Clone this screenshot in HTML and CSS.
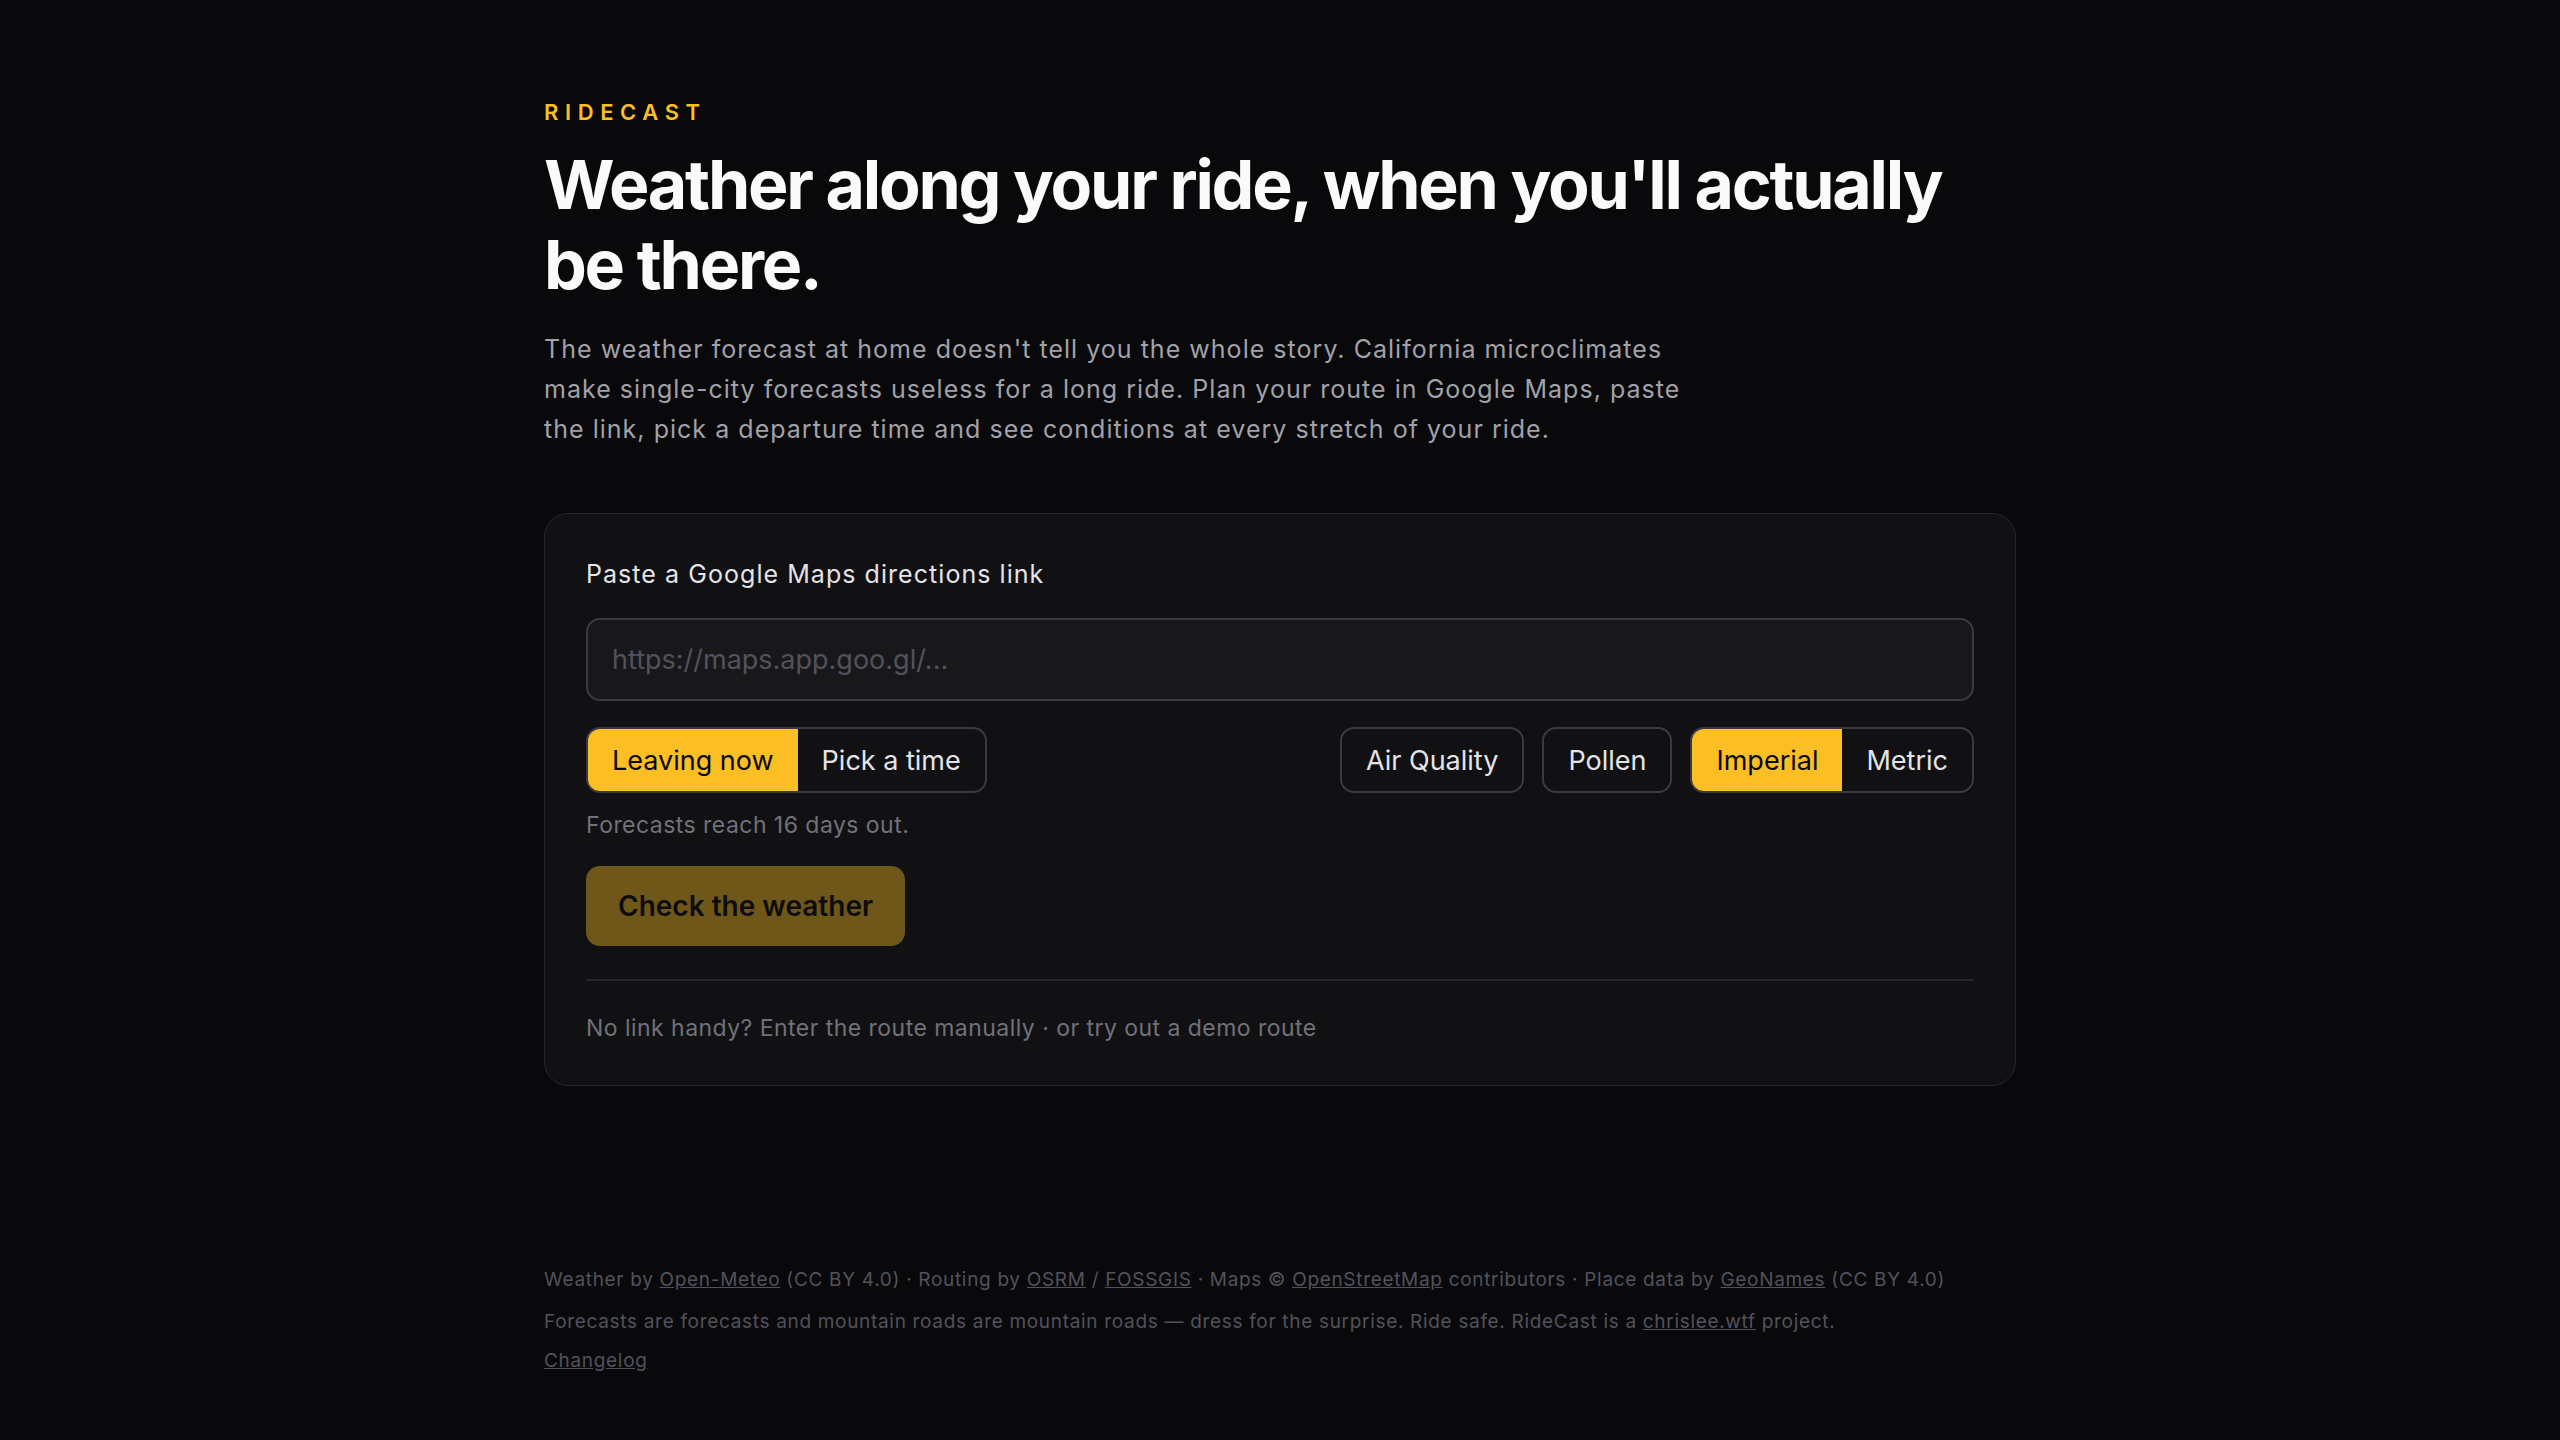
FILE: index.html
```html
<!DOCTYPE html>
<html lang="en">
<head>
    <meta charset="UTF-8">
    <meta name="viewport" content="width=device-width, initial-scale=1.0">
    <title>RideCast</title>
    <link rel="stylesheet" href="styles.css">
</head>
<body>
    <main class="page">
        <header class="intro">
            <div class="brand">RIDECAST</div>
            <h1 class="headline">Weather along your ride, when you'll actually be there.</h1>
            <p class="lede">The weather forecast at home doesn't tell you the whole story. California microclimates make single-city forecasts useless for a long ride. Plan your route in Google Maps, paste the link, pick a departure time and see conditions at every stretch of your ride.</p>
        </header>

        <section class="route-card">
            <label class="field-label" for="route-link">Paste a Google Maps directions link</label>
            <input class="route-input" id="route-link" type="text" placeholder="https://maps.app.goo.gl/...">

            <div class="options-row">
                <div class="segmented">
                    <button class="segment active">Leaving now</button>
                    <button class="segment">Pick a time</button>
                </div>
                <div class="options-right">
                    <button class="toggle">Air Quality</button>
                    <button class="toggle">Pollen</button>
                    <div class="segmented">
                        <button class="segment active">Imperial</button>
                        <button class="segment">Metric</button>
                    </div>
                </div>
            </div>

            <p class="hint">Forecasts reach 16 days out.</p>
            <button class="submit-button" disabled>Check the weather</button>

            <div class="card-footer">
                No link handy? Enter the route manually · or try out a demo route
            </div>
        </section>

        <footer class="site-footer">
            <p>Weather by <a href="#">Open-Meteo</a> (CC BY 4.0) · Routing by <a href="#">OSRM</a> / <a href="#">FOSSGIS</a> · Maps © <a href="#">OpenStreetMap</a> contributors · Place data by <a href="#">GeoNames</a> (CC BY 4.0)</p>
            <p>Forecasts are forecasts and mountain roads are mountain roads — dress for the surprise. Ride safe. RideCast is a <a href="#">chrislee.wtf</a> project.</p>
            <p><a href="#">Changelog</a></p>
        </footer>
    </main>
</body>
</html>
```

FILE: styles.css
```css
body {
    margin: 0;
    background-color: #09090b;
    color: #fafafa;
    font-family: Inter, "Noto Sans", sans-serif;
}

.page {
    width: 1472px;
    margin: 0 auto;
    padding: 96px 0 60px;
}

.brand {
    color: #fbbf24;
    font-size: 22px;
    font-weight: 600;
    letter-spacing: 0.3em;
    line-height: 33px;
}

.headline {
    margin: 15px 0 0;
    font-size: 68px;
    line-height: 80px;
    font-weight: 700;
    letter-spacing: -0.033em;
    max-width: 1420px;
}

.lede {
    margin: 25px 0 0;
    max-width: 1150px;
    font-size: 25px;
    line-height: 40px;
    letter-spacing: 0.041em;
    color: #a1a1aa;
}

.route-card {
    margin-top: 64px;
    background-color: #111113;
    border: 1px solid #27272a;
    border-radius: 24px;
    padding: 42px 41px 40px;
}

.field-label {
    display: block;
    font-size: 25px;
    line-height: 36px;
    letter-spacing: 0.042em;
    color: #e4e4e7;
}

.route-input {
    display: block;
    box-sizing: border-box;
    width: 100%;
    height: 83px;
    margin-top: 26px;
    padding: 0 24px;
    background-color: #18181b;
    border: 2px solid #3a3a40;
    border-radius: 14px;
    color: #fafafa;
    font-family: inherit;
    font-size: 27px;
    outline: none;
}

.route-input::placeholder {
    color: #52525b;
}

.options-row {
    display: flex;
    justify-content: space-between;
    align-items: center;
    margin-top: 26px;
}

.options-right {
    display: flex;
    align-items: center;
    gap: 18px;
}

.segmented {
    display: flex;
    height: 66px;
    box-sizing: border-box;
    border: 2px solid #3a3a40;
    border-radius: 14px;
    overflow: hidden;
}

.segment,
.toggle {
    background: none;
    border: none;
    color: #e4e4e7;
    font-family: inherit;
    font-size: 27px;
    padding: 0 24px;
    cursor: pointer;
}

.segment.active {
    background-color: #fbbf24;
    color: #09090b;
}

.toggle {
    height: 66px;
    box-sizing: border-box;
    border: 2px solid #3a3a40;
    border-radius: 14px;
}

.hint {
    margin: 15px 0 0;
    font-size: 23px;
    line-height: 34px;
    letter-spacing: 0.02em;
    color: #71717a;
}

.submit-button {
    display: block;
    height: 80px;
    margin-top: 24px;
    padding: 0 32px;
    background-color: #fbbf24;
    color: #09090b;
    border: none;
    border-radius: 14px;
    font-family: inherit;
    font-size: 28px;
    font-weight: 600;
}

.submit-button:disabled {
    opacity: 0.4;
    cursor: not-allowed;
}

.card-footer {
    margin-top: 33px;
    padding-top: 30px;
    border-top: 2px solid #27272a;
    font-size: 23px;
    line-height: 34px;
    letter-spacing: 0.02em;
    color: #71717a;
}

.site-footer {
    margin-top: 179px;
    font-size: 19px;
    line-height: 30px;
    letter-spacing: 0.036em;
    color: #52525b;
}

.site-footer p {
    margin: 0 0 12px;
}

.site-footer p:last-child {
    margin-top: -3px;
}

.site-footer a {
    color: inherit;
    text-decoration: underline;
}
```
